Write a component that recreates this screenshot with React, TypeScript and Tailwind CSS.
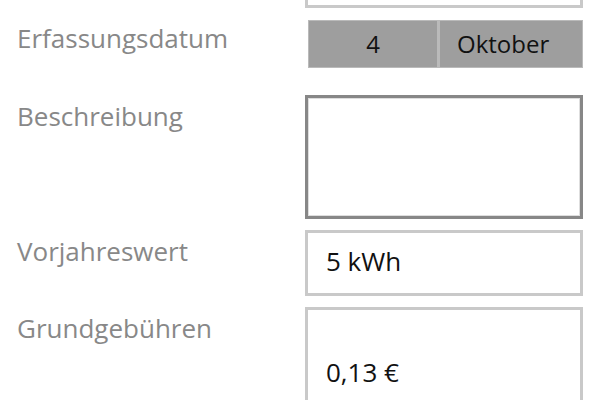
const labelClass = 'w-[305px] shrink-0 pl-[17px] pt-[4px] text-[26px] leading-[34px] text-[#888888]'
const boxClass = 'w-[278px] border-[3px] border-[#c9c9c9] bg-white'

function Row({ label, className, children }: { label?: string; className?: string; children: React.ReactNode }) {
  return (
    <div className={`flex items-start ${className ?? ''}`}>
      <div className={labelClass}>{label}</div>
      {children}
    </div>
  )
}

export default function App() {
  return (
    <div className="w-[600px] h-[400px] overflow-hidden bg-white" style={{ fontFamily: '"Open Sans", "Noto Sans", sans-serif' }}>
      <div className="-mt-[58px]">
        {/* oberes Feld, halb weggescrollt */}
        <Row>
          <div className={`${boxClass} h-[66px]`} />
        </Row>

        <Row label="Erfassungsdatum" className="mt-[9px]">
          <div className="w-[278px] h-[54px] pl-[3px] py-[3px]">
            <div className="flex h-full bg-[#bababa] p-px gap-[3px]">
              <div className="w-[128px] flex items-center justify-center bg-[#9e9e9e] text-[24px] text-[#111]">4</div>
              <div className="flex-1 flex items-center pl-[17px] bg-[#9e9e9e] text-[24px] text-[#111]">Oktober</div>
            </div>
          </div>
        </Row>

        <Row label="Beschreibung" className="mt-[24px]">
          <div className="w-[278px] h-[124px] border-[3px] border-[#878787] bg-white shadow-[inset_0_0_0_1px_#dedede]" />
        </Row>

        <Row label="Vorjahreswert" className="mt-[11px]">
          <div className={`${boxClass} h-[66px] pl-[18px] pt-[11px] text-[26px] leading-[34px] text-[#111]`}>5 kWh</div>
        </Row>

        <Row label="Grundgebühren" className="mt-[11px]">
          <div className={`${boxClass} h-[130px] pl-[18px] pt-[45px] text-[26px] leading-[34px] text-[#111]`}>0,13 €</div>
        </Row>
      </div>
    </div>
  )
}
